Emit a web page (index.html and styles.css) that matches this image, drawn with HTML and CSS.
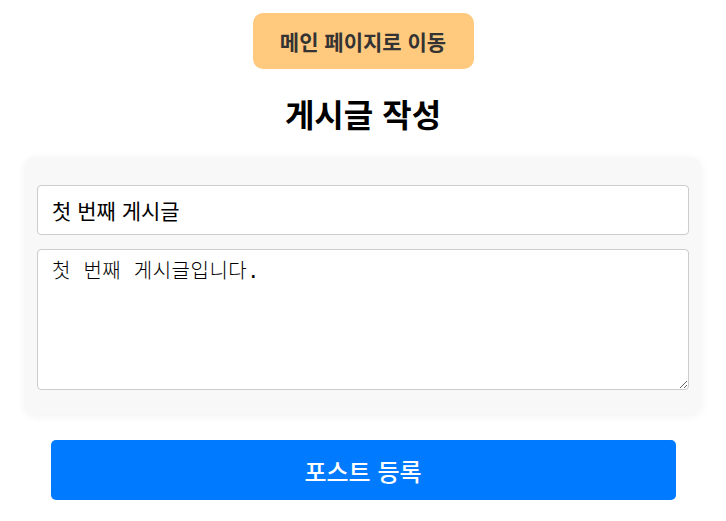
FILE: index.html
```html
<!DOCTYPE html>
<html lang="ko">

<head>
    <meta charset="UTF-8">
    <title>게시글 작성</title>
    <link rel="stylesheet" href="styles.css">
</head>

<body>
    <div class="page">
        <button class="btn-home">메인 페이지로 이동</button>
        <h1 class="page-title">게시글 작성</h1>
        <div class="post-form">
            <input class="post-title" type="text" value="첫 번째 게시글">
            <textarea class="post-content" spellcheck="false">첫 번째 게시글입니다.</textarea>
        </div>
        <button class="btn-submit">포스트 등록</button>
    </div>
</body>

</html>
```
FILE: styles.css
```css
* {
    margin: 0;
    padding: 0;
    box-sizing: border-box;
}

body {
    font-family: "Noto Sans CJK KR", "Noto Sans", sans-serif;
    background: #fff;
    color: #000;
}

.page {
    display: flex;
    flex-direction: column;
    align-items: center;
    padding: 13px 25px 0;
}

.btn-home {
    width: 221px;
    height: 56px;
    border: none;
    border-radius: 10px;
    background: #ffc97e;
    color: #333;
    font-family: inherit;
    font-size: 21px;
    font-weight: 700;
    cursor: pointer;
}

.page-title {
    margin-top: 22px;
    font-size: 32px;
    font-weight: 700;
    line-height: 44px;
}

.post-form {
    width: 100%;
    margin-top: 22px;
    padding: 28px 12px 24px;
    background: #f8f8f8;
    border-radius: 10px;
    box-shadow: 0 2px 10px rgba(0, 0, 0, 0.06);
    display: flex;
    flex-direction: column;
    gap: 14px;
}

.post-title,
.post-content {
    width: 100%;
    border: 1px solid #ccc;
    border-radius: 4px;
    background: #fff;
    padding: 0 14px;
    color: #000;
}

.post-title {
    height: 50px;
    font-family: inherit;
    font-size: 21px;
}

.post-content {
    height: 141px;
    padding-top: 7px;
    font-family: "DejaVu Sans Mono", "Noto Sans CJK KR", monospace;
    font-size: 20px;
    font-weight: 300;
    letter-spacing: 0.5px;
    line-height: 1.4;
    resize: vertical;
}

.btn-submit {
    width: 625px;
    height: 60px;
    margin-top: 26px;
    border: none;
    border-radius: 5px;
    background: #007bff;
    color: #fff;
    font-family: inherit;
    font-size: 24px;
    font-weight: 500;
    cursor: pointer;
}
```
